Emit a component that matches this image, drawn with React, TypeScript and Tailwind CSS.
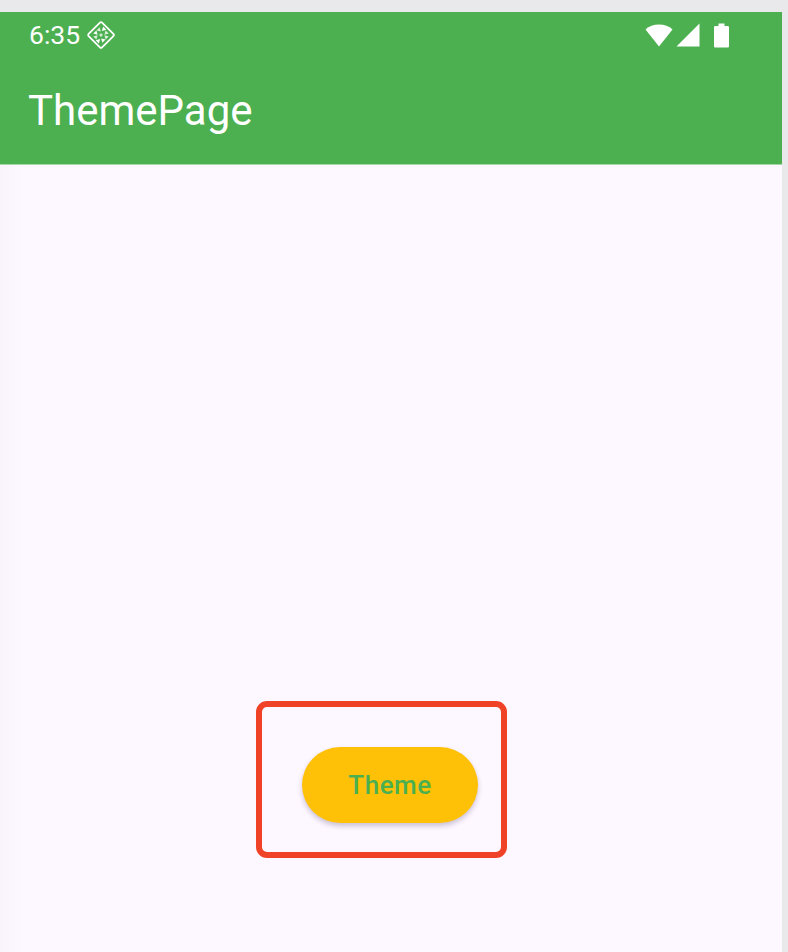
import React from 'react';

const font = { fontFamily: 'Roboto, sans-serif' };

const AppIcon = () => (
    <svg width="28" height="28" viewBox="0 0 28 28" fill="none">
        <rect x="4.500" y="4.500" width="19" height="19" rx="1.500" transform="rotate(45 14 14)" stroke="white" strokeWidth="1.800" />
        <g fill="white">
            <path d="M9.500 6.500H14L11.700 10.500Z" transform="rotate(45 14 14)" />
            <path d="M14 7.500H18.500L16.300 11.500Z" transform="rotate(45 14 14)" opacity="0.8" />
            <path d="M7.500 14V9.500L11.500 11.700Z" transform="rotate(45 14 14)" opacity="0.8" />
            <path d="M20.500 14V18.500L16.500 16.300Z" transform="rotate(45 14 14)" />
            <path d="M14 20.500H9.500L11.700 16.500Z" transform="rotate(45 14 14)" opacity="0.8" />
            <path d="M18.500 21.500H14L16.300 17.500Z" transform="rotate(45 14 14)" />
            <path d="M7.500 14V18.500L11.500 16.300Z" transform="rotate(45 14 14)" />
            <path d="M20.500 14V9.500L16.500 11.700Z" transform="rotate(45 14 14)" opacity="0.8" />
            <path d="M14 12L16 14L14 16L12 14Z" opacity="0.7" />
        </g>
    </svg>
);

const StatusIcons = () => (
    <div className="flex items-center">
        <svg width="28" height="24" viewBox="0 0 28 24" className="mr-[3px]">
            <path d="M0.500 6.500C4 3.200 8.600 1.500 14 1.500C19.400 1.500 24 3.200 27.500 6.500L14 23.500Z" fill="white" />
        </svg>
        <svg width="24" height="24" viewBox="0 0 24 24" className="mr-[14px]">
            <path d="M23.500 0.500V23.500H0.500Z" fill="white" />
        </svg>
        <svg width="15" height="25" viewBox="0 0 15 25">
            <path d="M4.500 0.500H10.500V3H13.500C14.500 3 15 3.500 15 4.500V23C15 24 14.500 24.500 13.500 24.500H1.500C0.500 24.500 0 24 0 23V4.500C0 3.500 0.500 3 1.500 3H4.500Z" fill="white" />
        </svg>
    </div>
);

export default function App() {
    return (
        <div className="relative h-[952px] w-[788px] overflow-hidden bg-[#e9e9eb] pt-3 pr-[6px]" style={font}>
            <header className="h-[153px] bg-[#4caf50] text-white border-b border-[#a5d6a7]">
                <div className="flex h-[46px] items-center justify-between pl-[29px] pr-[53px]">
                    <div className="flex items-center gap-[7px]">
                        <span className="text-[26.500px] leading-none">6:35</span>
                        <AppIcon />
                    </div>
                    <StatusIcons />
                </div>
                <h1 className="pl-[28px] pt-[27px] text-[42px] font-normal leading-[52px]">ThemePage</h1>
            </header>

            <main className="flex h-[787px] flex-col items-center bg-[linear-gradient(90deg,#f9f4fb,#fdf7ff_24px)] pt-[582px] pr-[2px]">
                <button className="h-[76px] w-[176px] rounded-full bg-[#ffc107] pt-px text-[26px] font-medium tracking-[0.5px] text-[#4caf50] shadow-[0_3px_5px_rgba(90,70,120,0.3)]">
                    Theme
                </button>
            </main>

            <div className="absolute left-[256px] top-[701px] h-[157px] w-[251px] rounded-[11px] border-[6px] border-[#f04226]" />
        </div>
    );
}
